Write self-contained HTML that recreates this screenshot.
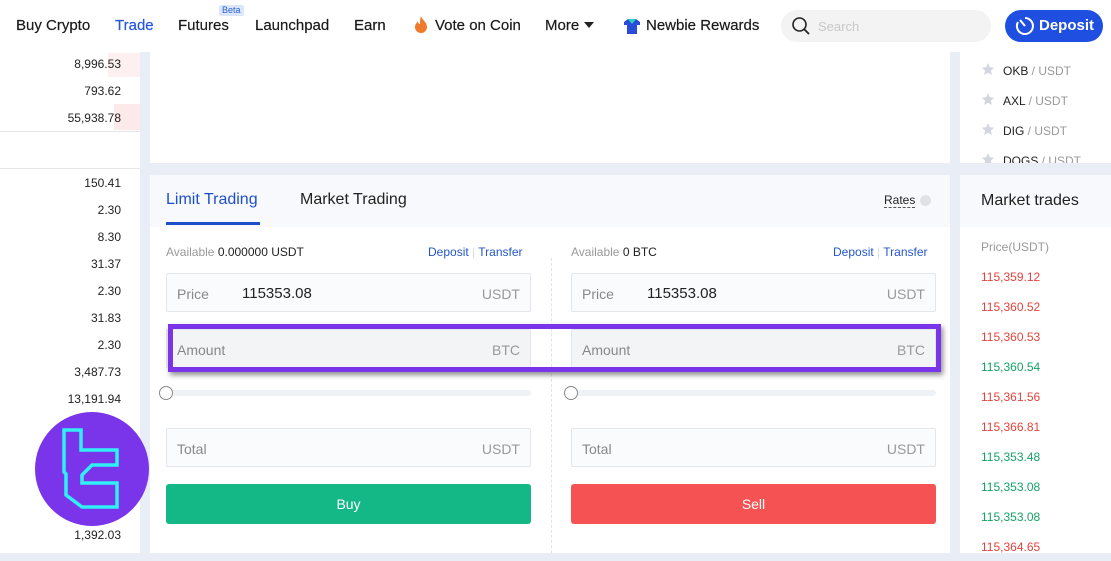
<!DOCTYPE html>
<html><head><meta charset="utf-8"><style>
*{margin:0;padding:0;box-sizing:border-box}
body{width:1111px;height:561px;overflow:hidden;background:#e9eef6;font-family:"Liberation Sans",Arial,sans-serif;position:relative;color:#222}
.a{position:absolute}
.nav{left:0;top:0;width:1111px;height:52px;background:#fff}
.nav span{position:absolute;top:17px;font-size:15px;color:#1a1a1a;-webkit-text-stroke:0.2px #1a1a1a}
.num{position:absolute;right:990px;font-size:12px;color:#222}
.inp{position:absolute;height:39px;border:1px solid #e3e6eb;background:#fafbfc;border-radius:2px}
.inp .l{position:absolute;left:10px;top:12px;font-size:14px;color:#888}
.inp .v{position:absolute;left:75px;top:11px;font-size:15px;color:#222}
.inp .r{position:absolute;right:10px;top:12px;font-size:14px;color:#999}
.tr{position:absolute;left:981px;font-size:12px}
.red{color:#e0443e}.grn{color:#16a266}
</style></head><body>
<div class="a nav">
<span style="left:16px">Buy Crypto</span>
<span style="left:115px;color:#2456e0;-webkit-text-stroke:0.2px #2456e0">Trade</span>
<span style="left:178px">Futures</span>
<div class="a" style="left:219px;top:5px;background:#dbe6fb;color:#2c62d8;font-size:9px;padding:0 3px;border-radius:2px;line-height:11px">Beta</div>
<span style="left:255px">Launchpad</span>
<span style="left:354px">Earn</span>
<svg class="a" style="left:414px;top:16px" width="14" height="18" viewBox="0 0 14 18"><path d="M7 0C8 4 13 6 13 11a6 6 0 0 1-12 0c0-3 2-4 3-6 0 2 1 3 2 3 0-3 0-5 1-8z" fill="#f07a2c"/></svg>
<span style="left:435px">Vote on Coin</span>
<span style="left:545px">More</span>
<svg class="a" style="left:584px;top:22px" width="10" height="6"><path d="M0 0h10L5 6z" fill="#222"/></svg>
<svg class="a" style="left:623px;top:17px" width="18" height="18" viewBox="0 0 18 18"><path d="M1 5l4-3h8l4 3v3h-3v9H4V8H1z" fill="#2a4bd8"/><path d="M5 2l4 5 4-5z" fill="#2fd1c0"/></svg>
<span style="left:646px">Newbie Rewards</span>
<div class="a" style="left:781px;top:10px;width:210px;height:32px;border-radius:16px;background:#f3f3f3"></div>
<svg class="a" style="left:791px;top:16px" width="20" height="20"><circle cx="8.5" cy="8.5" r="6.5" fill="none" stroke="#222" stroke-width="1.6"/><path d="M13 13l5 5" stroke="#222" stroke-width="1.8"/></svg>
<span style="left:818px;top:19px;font-size:13px;color:#c8c8c8;-webkit-text-stroke:0">Search</span>
<div class="a" style="left:1005px;top:10px;width:98px;height:32px;border-radius:16px;background:#1f4fe0"></div>
<svg class="a" style="left:1015px;top:16px" width="20" height="20"><path d="M10 2a8 8 0 1 1-7 4" fill="none" stroke="#fff" stroke-width="2"/><path d="M5 4l5 6" stroke="#fff" stroke-width="2"/></svg>
<span style="left:1039px;top:17px;color:#fff;font-weight:bold;-webkit-text-stroke:0">Deposit</span>
</div>
<!-- left column -->
<div class="a" style="left:0;top:52px;width:140px;height:501px;background:#fff"></div>
<div class="a" style="left:108px;top:53px;width:32px;height:24px;background:#fdf0f0"></div>
<div class="a" style="left:114px;top:104px;width:26px;height:26px;background:#fce9e9"></div>
<div class="a" style="left:0;top:131px;width:140px;height:1px;background:#e6e6e6"></div>
<div class="a" style="left:0;top:168px;width:140px;height:1px;background:#e6e6e6"></div>
<div class="num" style="top:57px">8,996.53</div>
<div class="num" style="top:84px">793.62</div>
<div class="num" style="top:111px">55,938.78</div>
<div class="num" style="top:176px">150.41</div>
<div class="num" style="top:203px">2.30</div>
<div class="num" style="top:230px">8.30</div>
<div class="num" style="top:257px">31.37</div>
<div class="num" style="top:284px">2.30</div>
<div class="num" style="top:311px">31.83</div>
<div class="num" style="top:338px">2.30</div>
<div class="num" style="top:365px">3,487.73</div>
<div class="num" style="top:392px">13,191.94</div>
<div class="num" style="top:528px">1,392.03</div>
<!-- logo -->
<div class="a" style="left:35px;top:412px;width:114px;height:114px;border-radius:50%;background:#7a35ea"></div>
<svg class="a" style="left:35px;top:412px" width="114" height="114" viewBox="0 0 114 114"><path d="M29 18H46V38H82V53H57L47 63V71H82V95H47L31 83V62L29 60Z" fill="none" stroke="#2ff0f5" stroke-width="3.5" stroke-linejoin="miter"/></svg>
<!-- middle top -->
<div class="a" style="left:150px;top:52px;width:800px;height:111px;background:#fff"></div>
<!-- right column -->
<div class="a" style="left:960px;top:52px;width:151px;height:111px;background:#fff"></div>
<svg class="a" style="left:981px;top:62px" width="14" height="101" viewBox="0 0 14 101"><g fill="#d3d6de"><path d="M7 1l1.8 4.2 4.5.4-3.4 3 1 4.4L7 10.7 3.1 13l1-4.4-3.4-3 4.5-.4z"/><path transform="translate(0,30)" d="M7 1l1.8 4.2 4.5.4-3.4 3 1 4.4L7 10.7 3.1 13l1-4.4-3.4-3 4.5-.4z"/><path transform="translate(0,60)" d="M7 1l1.8 4.2 4.5.4-3.4 3 1 4.4L7 10.7 3.1 13l1-4.4-3.4-3 4.5-.4z"/><path transform="translate(0,90)" d="M7 1l1.8 4.2 4.5.4-3.4 3 1 4.4L7 10.7 3.1 13l1-4.4-3.4-3 4.5-.4z"/></g></svg>
<div class="a" style="left:1003px;top:64px;font-size:12px">OKB<span style="color:#999"> / USDT</span></div>
<div class="a" style="left:1003px;top:94px;font-size:12px">AXL<span style="color:#999"> / USDT</span></div>
<div class="a" style="left:1003px;top:124px;font-size:12px">DIG<span style="color:#999"> / USDT</span></div>
<div class="a" style="left:1003px;top:154px;font-size:12px">DOGS<span style="color:#999"> / USDT</span></div>
<div class="a" style="left:960px;top:163px;width:151px;height:12px;background:#e9eef6"></div>
<div class="a" style="left:960px;top:175px;width:151px;height:378px;background:#fff"></div>
<div class="a" style="left:960px;top:175px;width:151px;height:52px;background:#f7f9fc"></div>
<div class="a" style="left:981px;top:192px;font-size:16px">Market trades</div>
<div class="a" style="left:981px;top:240px;font-size:12px;color:#999">Price(USDT)</div>
<div class="tr red" style="top:270px">115,359.12</div>
<div class="tr red" style="top:300px">115,360.52</div>
<div class="tr red" style="top:330px">115,360.53</div>
<div class="tr grn" style="top:360px">115,360.54</div>
<div class="tr red" style="top:390px">115,361.56</div>
<div class="tr red" style="top:420px">115,366.81</div>
<div class="tr grn" style="top:450px">115,353.48</div>
<div class="tr grn" style="top:480px">115,353.08</div>
<div class="tr grn" style="top:510px">115,353.08</div>
<div class="tr red" style="top:540px">115,364.65</div>
<!-- trading panel -->
<div class="a" style="left:150px;top:175px;width:800px;height:378px;background:#fff"></div>
<div class="a" style="left:150px;top:175px;width:800px;height:52px;background:#f7f9fc"></div>
<div class="a" style="left:166px;top:191px;font-size:16px;color:#1f4fc8">Limit Trading</div>
<div class="a" style="left:166px;top:222px;width:94px;height:3px;background:#1f4fc8"></div>
<div class="a" style="left:300px;top:191px;font-size:16px;color:#222">Market Trading</div>
<div class="a" style="left:884px;top:193px;font-size:12px;border-bottom:1px dashed #555">Rates</div>
<div class="a" style="left:920px;top:195px;width:11px;height:11px;border-radius:50%;background:#e0e2e6"></div>
<div class="a" style="left:551px;top:258px;height:295px;border-left:1px dashed #e3e3e3"></div>
<div class="a" style="left:166px;top:245px;font-size:12px;color:#999">Available <span style="color:#222">0.000000 USDT</span></div>
<div class="a" style="left:428px;top:245px;font-size:12px;color:#2456c8">Deposit <span style="color:#ddd">|</span> Transfer</div>
<div class="a" style="left:571px;top:245px;font-size:12px;color:#999">Available <span style="color:#222">0 BTC</span></div>
<div class="a" style="left:833px;top:245px;font-size:12px;color:#2456c8">Deposit <span style="color:#ddd">|</span> Transfer</div>
<div class="inp" style="left:166px;top:273px;width:365px"><span class="l">Price</span><span class="v">115353.08</span><span class="r">USDT</span></div>
<div class="inp" style="left:571px;top:273px;width:365px"><span class="l">Price</span><span class="v">115353.08</span><span class="r">USDT</span></div>
<div class="inp" style="left:166px;top:329px;width:365px;background:#f3f4f6"><span class="l">Amount</span><span class="r">BTC</span></div>
<div class="inp" style="left:571px;top:329px;width:365px;background:#f3f4f6"><span class="l">Amount</span><span class="r">BTC</span></div>
<div class="a" style="left:168px;top:324px;width:773px;height:48px;border:5px solid #7a35ea;box-shadow:2px 3px 5px rgba(0,0,0,.45)"></div>
<div class="a" style="left:166px;top:390px;width:365px;height:6px;background:#eef1f6;border-radius:3px"></div>
<div class="a" style="left:571px;top:390px;width:365px;height:6px;background:#eef1f6;border-radius:3px"></div>
<div class="a" style="left:159px;top:386px;width:14px;height:14px;border-radius:50%;border:1.5px solid #888;background:#fff"></div>
<div class="a" style="left:564px;top:386px;width:14px;height:14px;border-radius:50%;border:1.5px solid #888;background:#fff"></div>
<div class="inp" style="left:166px;top:428px;width:365px"><span class="l">Total</span><span class="r">USDT</span></div>
<div class="inp" style="left:571px;top:428px;width:365px"><span class="l">Total</span><span class="r">USDT</span></div>
<div class="a" style="left:166px;top:484px;width:365px;height:40px;background:#13b886;border-radius:3px;color:#fff;font-size:14px;text-align:center;line-height:40px">Buy</div>
<div class="a" style="left:571px;top:484px;width:365px;height:40px;background:#f55353;border-radius:3px;color:#fff;font-size:14px;text-align:center;line-height:40px">Sell</div>
</body></html>
